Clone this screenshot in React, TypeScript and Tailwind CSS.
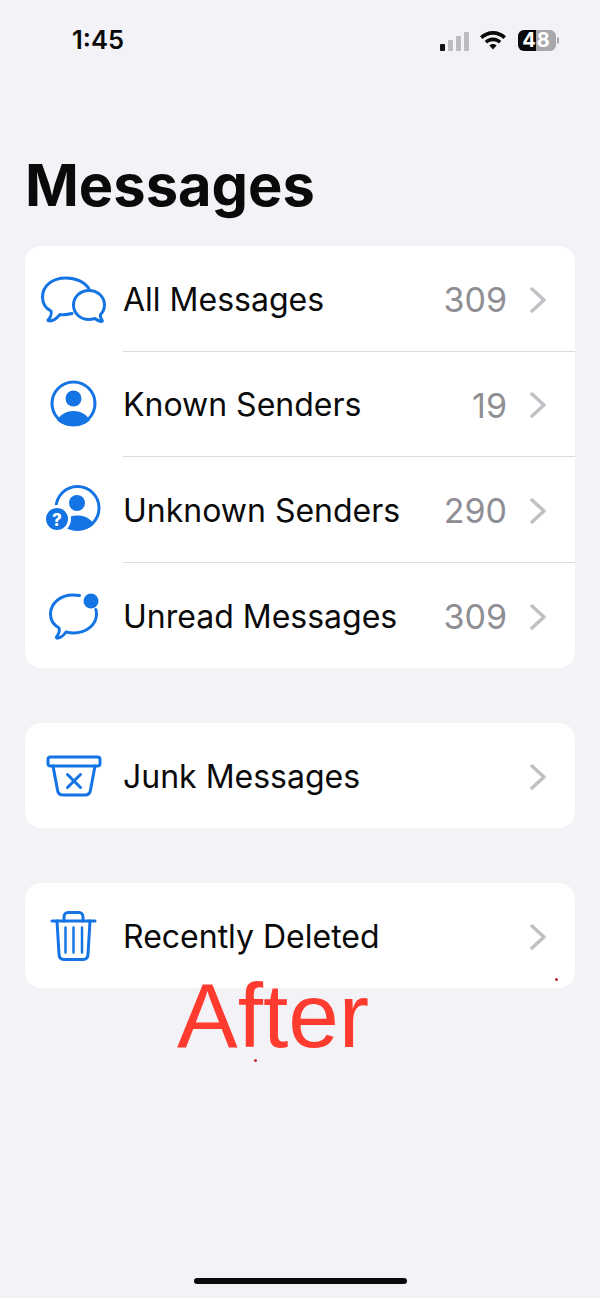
const BLUE = "#1474e4";

function IconBox({ children }: { children: React.ReactNode }) {
  return (
    <svg width="70" height="60" viewBox="0 0 70 60" fill="none" stroke={BLUE} strokeWidth="3" strokeLinecap="round" strokeLinejoin="round" className="shrink-0">
      {children}
    </svg>
  );
}

function AllIcon() {
  return (
    <IconBox>
      <path d="M51 20C47 13 38 9 28 9C14 9 4.500 17 4.500 28C4.500 34 7 39 13 42C14 45 12 49 10 51C10 52 11 52 12 52C16 52 19 49 22 45.500C26 46 30 45.500 34 44.500" />
      <path d="M51 21.500C42 21.500 35.500 28 35.500 36C35.500 44 42 50.500 51 50.500C53 50.500 55 50 57 49.500C59 51 61 52.500 63.500 52.500C64.500 52.500 64.500 51.500 64 51C63 49.500 62 47 62.500 45.500C65 43 66.500 40 66.500 36C66.500 28 60 21.500 51 21.500Z" />
    </IconBox>
  );
}

function KnownIcon() {
  return (
    <IconBox>
      <circle cx="35.500" cy="29.500" r="21.500" />
      <circle cx="35.500" cy="24.500" r="8" fill={BLUE} stroke="none" />
      <path d="M19 46C23 40 29 37 35.500 37C42 37 48 40 52 46C48 50 42 52 35.500 52C29 52 23 50 19 46Z" fill={BLUE} stroke="none" />
    </IconBox>
  );
}

function UnknownIcon() {
  return (
    <IconBox>
      <circle cx="39.500" cy="28" r="21.500" />
      <circle cx="39" cy="23" r="8" fill={BLUE} stroke="none" />
      <path d="M23 44C27 38 33 35.500 39.500 35.500C46 35.500 52 38 56 44C52 48 46 50 39.500 50C33 50 27 48 23 44Z" fill={BLUE} stroke="none" />
      <circle cx="19" cy="39" r="14" fill="#fff" stroke="none" />
      <circle cx="19" cy="39" r="11" fill={BLUE} stroke="none" />
      <text x="19" y="45.500" textAnchor="middle" fill="#fff" stroke="none" fontSize="17" fontWeight="800" fontFamily="Inter, sans-serif">?</text>
    </IconBox>
  );
}

function UnreadIcon() {
  return (
    <IconBox>
      <path d="M41.500 10.500C39 10 37 10 35 10C22 10 12.500 18.500 12.500 29C12.500 35 15.500 40 21 43C22 46 20 50 18.500 52C18 53 19 53.500 20 53C23 52.500 26 50 28 47C30 47.500 33 48 35.500 48C48 48 58.500 40 58.500 29C58.500 27 58.200 25.500 57.800 24.500" />
      <circle cx="53" cy="16" r="7.500" fill={BLUE} stroke="none" />
    </IconBox>
  );
}

function JunkIcon() {
  return (
    <IconBox>
      <rect x="10" y="11" width="52" height="9" rx="2.500" />
      <path d="M15 20L19.500 44C20 47.500 22 49 25 49H47C50 49 52 47.500 52.500 44L57 20" />
      <path d="M29.500 28.500L42.500 41.500M42.500 28.500L29.500 41.500" />
    </IconBox>
  );
}

function TrashIcon() {
  return (
    <IconBox>
      <path d="M14 15H57" />
      <path d="M26 15V11C26 8 28 6.500 30 6.500H41C43 6.500 45 8 45 11V15" />
      <path d="M19 15L21 48C21 51.500 23 53.500 26 53.500H45C48 53.500 50 51.500 50 48L52 15" />
      <path d="M27.500 21.500V46.500M35.500 21.500V46.500M44 21.500V46.500" strokeWidth="2.500" />
    </IconBox>
  );
}

type RowData = { label: string; count?: string; icon: React.ReactNode };

const mainRows: RowData[] = [
  { label: "All Messages", count: "309", icon: <AllIcon /> },
  { label: "Known Senders", count: "19", icon: <KnownIcon /> },
  { label: "Unknown Senders", count: "290", icon: <UnknownIcon /> },
  { label: "Unread Messages", count: "309", icon: <UnreadIcon /> },
];

function Row({ row, divider }: { row: RowData; divider?: boolean }) {
  return (
    <div className="flex h-full items-center pl-[13px]">
      {row.icon}
      <div className={`ml-[15px] flex h-full flex-1 items-center pt-[3px] pr-[28px] ${divider ? "border-b border-[#dcdce0]" : ""}`}>
        <span className="flex-1 text-[32px] text-[#0a0a0a]">{row.label}</span>
        {row.count && <span className="text-[34px] text-[#8e8e93]">{row.count}</span>}
        <svg width="18" height="26" viewBox="0 0 18 26" fill="none" stroke="#c0c0c5" strokeWidth="3.500" strokeLinecap="round" strokeLinejoin="round" className="ml-[22px]">
          <path d="M3 2L15 13L3 24" />
        </svg>
      </div>
    </div>
  );
}

export default function App() {
  return (
    <div className="relative h-[1298px] w-[600px] overflow-hidden bg-[#f2f2f7] font-['Inter',sans-serif]">
      <div className="flex h-[80px] items-center pl-[72px] pr-[41px]">
        <span className="mt-[1px] flex-1 text-[25.500px] font-semibold text-[#0a0a0a]">1:45</span>
        <div className="mt-[1px] flex h-[20px] items-end gap-[3px]">
          <div className="h-[7px] w-[5px] rounded-[1px] bg-[#111]" />
          <div className="h-[11px] w-[5px] rounded-[1px] bg-[#bcbcc0]" />
          <div className="h-[15px] w-[5px] rounded-[1px] bg-[#bcbcc0]" />
          <div className="h-[19px] w-[5px] rounded-[1px] bg-[#bcbcc0]" />
        </div>
        <svg width="26" height="19" viewBox="0 0 26 19" fill="#0a0a0a" className="ml-[11px]">
          <path d="M13 0C8 0 3.500 2 0 5.300L2.500 8C5.300 5.300 9 3.700 13 3.700C17 3.700 20.700 5.300 23.500 8L26 5.300C22.500 2 18 0 13 0Z" />
          <path d="M13 6.500C9.800 6.500 6.900 7.800 4.700 9.900L7.200 12.500C8.700 11.100 10.800 10.200 13 10.200C15.200 10.200 17.300 11.100 18.800 12.500L21.300 9.900C19.100 7.800 16.200 6.500 13 6.500Z" />
          <path d="M13 13C11.700 13 10.400 13.500 9.400 14.500L13 18.500L16.600 14.500C15.600 13.500 14.300 13 13 13Z" />
        </svg>
        <div className="ml-[12px] flex items-center">
          <div className="flex h-[21px] w-[38px] items-center justify-center rounded-[6px] bg-[linear-gradient(90deg,#0a0a0a_47%,#a8a8ab_47%)] pr-[1px] text-[20px] leading-none font-bold tracking-[1px] text-white">
            48
          </div>
          <div className="ml-[1px] h-[7px] w-[2px] rounded-r-[2px] bg-[#a8a8ab]" />
        </div>
      </div>

      <h1 className="mt-[69px] pl-[25px] text-[57.800px] leading-[72px] font-bold text-[#0a0a0a]">Messages</h1>

      <div className="mx-[25px] mt-[25px] flex flex-col gap-[55px]">
        <div className="grid h-[422px] auto-rows-fr overflow-hidden rounded-[16px] bg-white">
          {mainRows.map((row, i) => (
            <Row key={row.label} row={row} divider={i < mainRows.length - 1} />
          ))}
        </div>
        <div className="h-[105px] overflow-hidden rounded-[16px] bg-white">
          <Row row={{ label: "Junk Messages", icon: <JunkIcon /> }} />
        </div>
        <div className="h-[105px] overflow-hidden rounded-[16px] bg-white">
          <Row row={{ label: "Recently Deleted", icon: <TrashIcon /> }} />
        </div>
      </div>

      <div className="absolute bottom-[14px] left-[194px] h-[6px] w-[213px] rounded-full bg-[#0a0a0a]" />

      {/* annotation on top of the screenshot */}
      <span className="absolute left-[177px] top-[964px] font-['Liberation_Sans',sans-serif] text-[91px] leading-[104px] text-[#ff3b30]">After</span>
      <div className="absolute left-[555px] top-[978px] h-[3px] w-[3px] rounded-full bg-[#c0272d]" />
      <div className="absolute left-[254px] top-[1059px] h-[3px] w-[3px] rounded-full bg-[#c0272d]" />
    </div>
  );
}
